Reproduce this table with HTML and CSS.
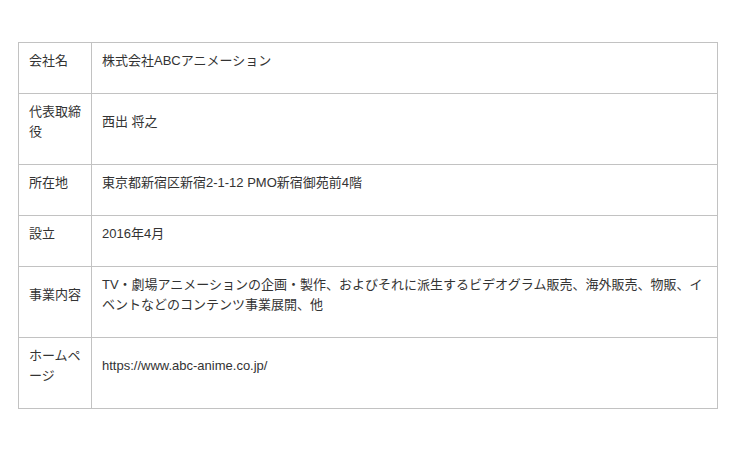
FILE: index.html
```html
<!DOCTYPE html>
<html>
<head>
	<title>会社概要</title>
	<meta charset="UTF-8">
	<link rel="stylesheet" href="styles.css">
</head>
<body>
<div id="container">
	<table class="info">
		<tr>
			<th><p>会社名</p></th>
			<td><p>株式会社ABCアニメーション</p></td>
		</tr>
		<tr>
			<th><p>代表取締役</p></th>
			<td><p>西出 将之</p></td>
		</tr>
		<tr>
			<th><p>所在地</p></th>
			<td><p>東京都新宿区新宿2-1-12 PMO新宿御苑前4階</p></td>
		</tr>
		<tr>
			<th><p>設立</p></th>
			<td><p>2016年4月</p></td>
		</tr>
		<tr>
			<th><p>事業内容</p></th>
			<td><p>TV・劇場アニメーションの企画・製作、およびそれに派生するビデオグラム販売、海外販売、物販、イベントなどのコンテンツ事業展開、他</p></td>
		</tr>
		<tr>
			<th><p>ホームページ</p></th>
			<td><p>https://www.abc-anime.co.jp/</p></td>
		</tr>
	</table>
</div>
</body>
</html>
```

FILE: styles.css
```css
body
{
	margin: 0; background: #fff; color: #333;
	font-family: "Liberation Sans", "Noto Sans CJK JP", sans-serif; font-size: 13px;
}
#container
{
	padding: 42px 22px 0 18px;
}
.info
{
	width: 700px; border-collapse: collapse; table-layout: fixed;
}
.info th, .info td
{
	border: 1px solid #c2c2c2; padding: 8px 10px; vertical-align: middle; text-align: left; font-weight: normal; line-height: 20px;
}
.info th
{
	width: 52px;
}
.info p
{
	margin: 0 0 14px 0;
}
```
